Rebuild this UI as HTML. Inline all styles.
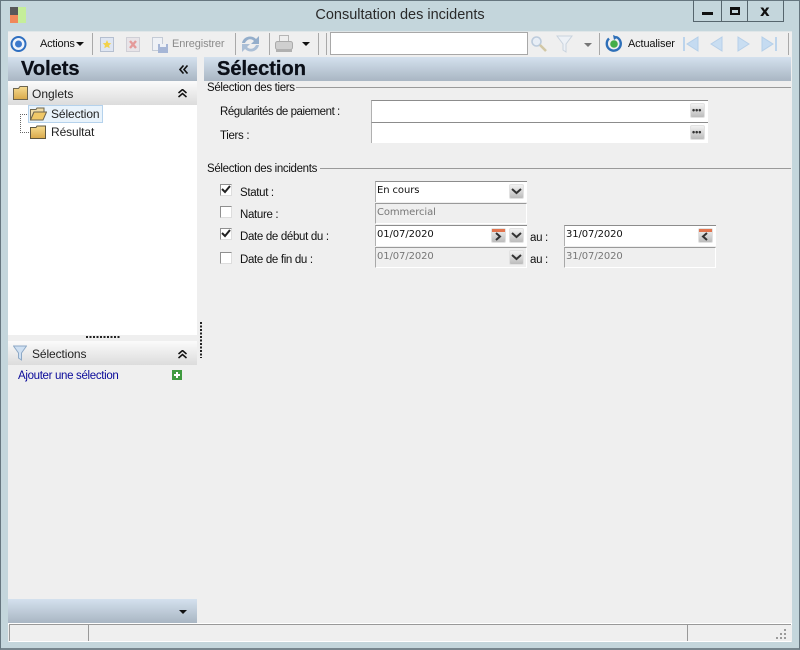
<!DOCTYPE html>
<html lang="fr"><head><meta charset="utf-8"><title>Consultation des incidents</title>
<style>
html,body{margin:0;padding:0}
body{width:800px;height:650px;overflow:hidden;position:relative;background:#c4d6dc;font-family:"Liberation Sans",sans-serif;font-size:12px;color:#111}
div,span,svg{position:absolute;box-sizing:border-box}
.t{white-space:nowrap;line-height:14px}
.l{font-size:11.5px;letter-spacing:-.33px}
.tb{font-size:11px;letter-spacing:-.12px}
.hd{background:linear-gradient(#d4e1ee,#a9b6c3)}
.ph{background:linear-gradient(#fbfbfb,#dcdcdc)}
.sep{width:1px;background:#a9a9a9;top:33px;height:22px}
.in{background:#fff;border-top:1px solid #8c8c8c;border-left:1px solid #b0b0b0}
.dis{background:#efefef;border-top:1px solid #9a9a9a;border-left:1px solid #a8a8a8;border-right:1px solid #fff;border-bottom:1px solid #fff}
.cb{width:12px;height:12px;background:#fff;border:1px solid #8f8f8f;border-right-color:#ddd;border-bottom-color:#ddd}
.btn{width:15px;height:15px;background:linear-gradient(#f2f2f2,#bcbcbc);border:1px solid #e2e2e2;border-radius:2px}
.val{font-family:"DejaVu Sans",sans-serif;font-size:10px;white-space:nowrap;line-height:12px;letter-spacing:-.1px}
.g{color:#777}
.big{font-size:20px;line-height:22px;font-weight:bold;color:#0b0f18;-webkit-text-stroke:.3px #0b0f18}
</style></head><body>
<div style="left:0;top:0;width:800px;height:650px;border:1px solid #66767f;border-bottom-width:2px;border-bottom-color:#77868e"></div>

<svg style="left:10px;top:7px" width="17" height="17"><rect x="0" width="8" height="8" fill="#58585a"/><rect x="0" y="8" width="8" height="8" fill="#f0885a"/><rect x="8" width="8" height="16" fill="#c5ee9a"/></svg>
<div class="t" style="left:250px;width:300px;text-align:center;top:7px;font-size:14.5px;line-height:16px;color:#2a2a2a">Consultation des incidents</div>

<div style="left:693px;top:0;width:91px;height:22px;border:1px solid #56656d;border-top:0"></div>
<div style="left:721px;top:0;width:1px;height:21px;background:#56656d"></div>
<div style="left:747px;top:0;width:1px;height:21px;background:#56656d"></div>
<div style="left:702px;top:12px;width:11px;height:3px;background:#111"></div>
<div style="left:730px;top:7px;width:10px;height:8px;border:2px solid #111;border-top-width:3px"></div>
<div class="t" style="left:760px;top:2px;font-size:15px;font-weight:bold;line-height:18px;color:#111;font-family:'DejaVu Sans',sans-serif">x</div>

<div style="left:8px;top:31px;width:784px;height:611px;background:#efefef"></div>
<div style="left:8px;top:31px;width:784px;height:1px;background:#dfe6e8"></div>

<svg style="left:10px;top:35px" width="18" height="18"><circle cx="8.500" cy="9" r="7" fill="#eef3fb" stroke="#2f6fc0" stroke-width="2"/><circle cx="8.500" cy="9" r="3.500" fill="#3c79cc"/></svg>
<div class="t tb" style="left:40px;top:37px;letter-spacing:-.2px">Actions</div>
<svg style="left:76px;top:42px" width="9" height="5"><path d="M0 0H8L4 4Z" fill="#111"/></svg>
<div class="sep" style="left:92px"></div>
<svg style="left:100px;top:37px" width="14" height="15"><rect x=".5" y=".5" width="13" height="14" fill="#dfe6f2" stroke="#b5bfd0"/><path d="M7 3l1.300 3 3 .3-2.200 2 .6 3-2.700-1.500-2.700 1.500.6-3-2.200-2 3-.3Z" fill="#f3d24a"/></svg>
<svg style="left:126px;top:37px" width="14" height="15"><rect x=".5" y=".5" width="13" height="14" fill="#e8e4e8" stroke="#cfcfd6"/><path d="M4 4l6 7M10 4l-6 7" stroke="#e49a9a" stroke-width="2.400"/></svg>
<svg style="left:152px;top:37px" width="16" height="16"><rect x=".5" y=".5" width="10" height="13" fill="#eef1f6" stroke="#c4cbd6"/><rect x="6" y="7" width="10" height="9" fill="#a6b6d6"/><rect x="8" y="7" width="6" height="3" fill="#eef1f6"/></svg>
<div class="t tb" style="left:172px;top:37px;color:#8b8b8b">Enregistrer</div>
<div class="sep" style="left:235px"></div>
<svg style="left:241px;top:34px" width="19" height="20"><path d="M1 9C2 3 10 0 15 5L18 2V10H10L13 7C10 4 6 5 4 9Z" fill="#94aecb"/><path d="M18 11C17 17 9 20 4 15L1 18V10H9L6 13C9 16 13 15 15 11Z" fill="#abbfd6"/></svg>
<div class="sep" style="left:269px"></div>
<svg style="left:275px;top:35px" width="18" height="18"><rect x="4.500" y=".5" width="9" height="6" fill="#eee" stroke="#b5b5b5"/><rect x=".5" y="6.500" width="17" height="8" rx="2" fill="#cfcfcf" stroke="#aaa"/><rect x="1" y="14" width="16" height="3" fill="#b0b0b0"/></svg>
<svg style="left:302px;top:42px" width="9" height="5"><path d="M0 0H8L4 4Z" fill="#111"/></svg>
<div class="sep" style="left:318px"></div>
<div class="sep" style="left:326px"></div>
<div style="left:330px;top:32px;width:198px;height:23px;background:#fff;border:1px solid #a8a8a8"></div>
<svg style="left:530px;top:35px" width="18" height="18"><circle cx="6.500" cy="6.500" r="4.500" fill="#e8eef6" stroke="#bccbdc" stroke-width="1.600"/><path d="M10 10l6 6" stroke="#d2c8a6" stroke-width="2.600"/></svg>
<svg style="left:556px;top:35px" width="18" height="18"><path d="M1 1H16L10 9V17L7 15V9Z" fill="#edf1f6" stroke="#c9d3de"/></svg>
<svg style="left:584px;top:43px" width="9" height="5"><path d="M0 0H8L4 4Z" fill="#777"/></svg>
<div class="sep" style="left:599px"></div>
<svg style="left:605px;top:35px" width="18" height="18"><path d="M4 3.500A7 7 0 1 0 11 2" fill="none" stroke="#2e6fb8" stroke-width="2.400"/><path d="M8 0l5 2-4 3Z" fill="#2e6fb8"/><circle cx="9" cy="9" r="3.800" fill="#44ad48"/></svg>
<div class="t tb" style="left:628px;top:37px;letter-spacing:-.15px">Actualiser</div>
<svg style="left:683px;top:36px" width="16" height="16"><path d="M1 1V15" stroke="#bcd4ec" stroke-width="2"/><path d="M15 1V15L4 8Z" fill="#c5dbf1" stroke="#b4cfe9"/></svg>
<svg style="left:710px;top:36px" width="13" height="16"><path d="M12 1V15L1 8Z" fill="#c9def2" stroke="#b6cfe9"/></svg>
<svg style="left:737px;top:36px" width="13" height="16"><path d="M1 1V15L12 8Z" fill="#c9def2" stroke="#b6cfe9"/></svg>
<svg style="left:761px;top:36px" width="16" height="16"><path d="M15 1V15" stroke="#bcd4ec" stroke-width="2"/><path d="M1 1V15L12 8Z" fill="#c5dbf1" stroke="#b4cfe9"/></svg>
<div class="sep" style="left:788px"></div>

<div class="hd" style="left:8px;top:57px;width:189px;height:24px"></div>
<div class="t big" style="left:21px;top:58px">Volets</div>
<svg style="left:179px;top:65px" width="10" height="9"><path d="M4.500 .5L1 4.500l3.500 4M8.500 .5L5 4.500l3.500 4" fill="none" stroke="#111" stroke-width="1.600"/></svg>
<div class="hd" style="left:204px;top:57px;width:587px;height:24px"></div>
<div class="t big" style="left:217px;top:58px">Sélection</div>

<div class="ph" style="left:8px;top:81px;width:189px;height:24px"></div>
<svg style="left:13px;top:86px" width="15" height="14"><defs><linearGradient id="f" x1="0" y1="0" x2="0" y2="1"><stop offset="0" stop-color="#f6dc92"/><stop offset="1" stop-color="#d9a94a"/></linearGradient></defs><path d="M.5 2.500H5.500L7 .5H14.500V13.500H.5Z" fill="url(#f)" stroke="#6d654f"/></svg>
<div class="t" style="left:32px;top:87px;font-size:12px;color:#222">Onglets</div>
<svg style="left:178px;top:89px" width="9" height="9"><path d="M.5 4L4.500 .5 8.500 4M.5 8L4.500 4.500 8.500 8" fill="none" stroke="#111" stroke-width="1.500"/></svg>
<div style="left:8px;top:105px;width:189px;height:230px;background:#fff"></div>

<div style="left:20px;top:114px;width:1px;height:19px;border-left:1px dotted #666"></div>
<div style="left:20px;top:114px;width:9px;height:1px;border-top:1px dotted #666"></div>
<div style="left:20px;top:132px;width:9px;height:1px;border-top:1px dotted #666"></div>
<div style="left:28px;top:105px;width:75px;height:18px;background:#e9f3fb;border:1px solid #b5d2ec"></div>
<svg style="left:30px;top:107px" width="17" height="14"><path d="M.5 2.500H6L7 1H14V5H4L.5 13Z" fill="#f0dca6" stroke="#6d654f"/><path d="M.5 13L4 5H16.500L13 13Z" fill="#f0c868" stroke="#6d654f"/></svg>
<div class="t" style="left:51px;top:107px;font-size:12px;letter-spacing:-.1px;color:#222">Sélection</div>
<svg style="left:30px;top:125px" width="16" height="14"><path d="M.5 2.500H6L7 1H15.500V13.500H.5Z" fill="url(#f)" stroke="#5f573f"/></svg>
<div class="t" style="left:51px;top:125px;font-size:12px;letter-spacing:-.1px;color:#222">Résultat</div>

<div style="left:86px;top:336px;width:35px;height:2px;background:repeating-linear-gradient(90deg,#222 0 2px,transparent 2px 3.500px)"></div>
<div style="left:200px;top:322px;width:2px;height:36px;background:repeating-linear-gradient(180deg,#222 0 2px,transparent 2px 3.500px)"></div>

<div class="ph" style="left:8px;top:341px;width:189px;height:24px"></div>
<svg style="left:13px;top:345px" width="14" height="16"><path d="M.5 1H13.500L8.500 8V15L5.500 13V8Z" fill="#cfe0f2" stroke="#8ea9c6"/></svg>
<div class="t" style="left:32px;top:347px;font-size:12px;letter-spacing:-.1px;color:#222">Sélections</div>
<svg style="left:178px;top:350px" width="9" height="9"><path d="M.5 4L4.500 .5 8.500 4M.5 8L4.500 4.500 8.500 8" fill="none" stroke="#111" stroke-width="1.500"/></svg>
<div class="t" style="left:18px;top:369px;font-size:11.500px;letter-spacing:-.33px;color:#0a0a9a">Ajouter une sélection</div>
<svg style="left:172px;top:370px" width="10" height="10"><rect width="10" height="10" fill="#3f9a3f"/><path d="M5 2V8M2 5H8" stroke="#fff" stroke-width="2"/></svg>

<div class="hd" style="left:8px;top:599px;width:189px;height:24px"></div>
<svg style="left:179px;top:610px" width="9" height="5"><path d="M0 0H8L4 4Z" fill="#111"/></svg>

<div style="left:8px;top:623px;width:784px;height:19px;background:#efefef;border-top:2px solid #fff"></div>
<div style="left:9px;top:624px;width:782px;height:1px;background:#999"></div>
<div style="left:9px;top:641px;width:782px;height:1px;background:#fff"></div>
<div style="left:9px;top:624px;width:1px;height:17px;background:#999"></div>
<div style="left:88px;top:624px;width:1px;height:17px;background:#999"></div>
<div style="left:687px;top:624px;width:1px;height:17px;background:#999"></div>
<svg style="left:776px;top:629px" width="12" height="11" fill="#9a9a9a"><rect x="8" y="0" width="2" height="2"/><rect x="4" y="4" width="2" height="2"/><rect x="8" y="4" width="2" height="2"/><rect x="0" y="8" width="2" height="2"/><rect x="4" y="8" width="2" height="2"/><rect x="8" y="8" width="2" height="2"/></svg>

<div class="t l" style="left:207px;top:81px;z-index:2">Sélection des tiers</div>
<div style="left:296px;top:87px;width:495px;height:1px;background:#9a9a9a"></div>
<div class="t l" style="left:220px;top:105px;letter-spacing:-.45px">Régularités de paiement :</div>
<div class="t l" style="left:220px;top:129px">Tiers :</div>
<div class="in" style="left:371px;top:100px;width:337px;height:22px"></div>
<div class="in" style="left:371px;top:122px;width:337px;height:21px"></div>
<div class="btn" style="left:690px;top:103px"></div><div class="t" style="left:692px;top:105px;font-size:9px;font-weight:bold;line-height:10px;color:#333">•••</div>
<div class="btn" style="left:690px;top:125px"></div><div class="t" style="left:692px;top:127px;font-size:9px;font-weight:bold;line-height:10px;color:#333">•••</div>

<div class="t l" style="left:207px;top:162px">Sélection des incidents</div>
<div style="left:320px;top:168px;width:471px;height:1px;background:#9a9a9a"></div>

<div class="cb" style="left:220px;top:184px"></div>
<svg style="left:221px;top:185px" width="10" height="10"><path d="M1 4l3 3 5-6" fill="none" stroke="#222" stroke-width="2"/></svg>
<div class="t l" style="left:240px;top:186px">Statut :</div>
<div class="cb" style="left:220px;top:206px"></div>
<div class="t l" style="left:240px;top:208px">Nature :</div>
<div class="cb" style="left:220px;top:228px"></div>
<svg style="left:221px;top:229px" width="10" height="10"><path d="M1 4l3 3 5-6" fill="none" stroke="#222" stroke-width="2"/></svg>
<div class="t l" style="left:240px;top:230px">Date de début du :</div>
<div class="cb" style="left:220px;top:252px"></div>
<div class="t l" style="left:240px;top:253px">Date de fin du :</div>

<div class="in" style="left:375px;top:181px;width:152px;height:21px"></div>
<div class="val" style="left:377px;top:184px;top:185px">En cours</div>
<div class="btn" style="left:509px;top:184px"></div>
<svg style="left:511px;top:188px" width="11" height="7"><path d="M1 1l4.500 4 4.500-4" fill="none" stroke="#333" stroke-width="2"/></svg>

<div class="dis" style="left:375px;top:203px;width:152px;height:21px"></div>
<div class="val g" style="left:377px;top:207px">Commercial</div>

<div class="in" style="left:375px;top:225px;width:152px;height:21px"></div>
<div class="val" style="left:377px;top:229px">01/07/2020</div>
<div class="btn" style="left:491px;top:228px"></div>
<div style="left:492px;top:229px;width:13px;height:3px;background:#e2754f"></div>
<svg style="left:494px;top:232px" width="9" height="9"><path d="M2 1l4 3.500-4 3.500" fill="none" stroke="#333" stroke-width="2"/></svg>
<div class="btn" style="left:509px;top:228px"></div>
<svg style="left:511px;top:232px" width="11" height="7"><path d="M1 1l4.500 4 4.500-4" fill="none" stroke="#333" stroke-width="2"/></svg>
<div class="t l" style="left:530px;top:231px">au :</div>

<div class="dis" style="left:375px;top:247px;width:152px;height:21px"></div>
<div class="val g" style="left:377px;top:251px">01/07/2020</div>
<div class="btn" style="left:509px;top:250px"></div>
<svg style="left:511px;top:254px" width="11" height="7"><path d="M1 1l4.500 4 4.500-4" fill="none" stroke="#333" stroke-width="2"/></svg>
<div class="t l" style="left:530px;top:253px">au :</div>

<div class="in" style="left:564px;top:225px;width:152px;height:21px"></div>
<div class="val" style="left:566px;top:229px">31/07/2020</div>
<div class="btn" style="left:698px;top:228px"></div>
<div style="left:699px;top:229px;width:13px;height:3px;background:#e2754f"></div>
<svg style="left:701px;top:232px" width="9" height="9"><path d="M6 1L2 4.500 6 8" fill="none" stroke="#333" stroke-width="2"/></svg>

<div class="dis" style="left:564px;top:247px;width:152px;height:21px"></div>
<div class="val g" style="left:566px;top:251px">31/07/2020</div>
</body></html>
